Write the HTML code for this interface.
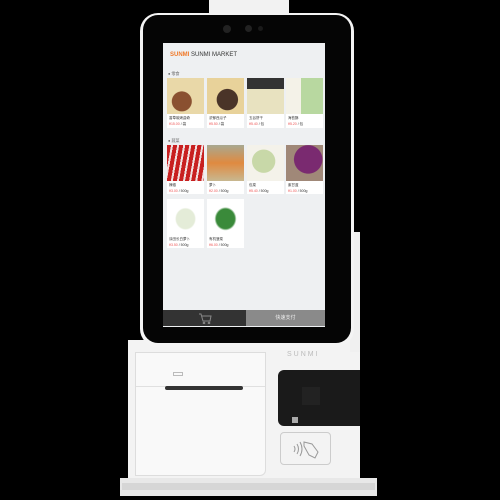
<!DOCTYPE html><html><head><meta charset="utf-8"><style>
*{margin:0;padding:0;box-sizing:border-box}
body{width:500px;height:500px;background:#000;position:relative;overflow:hidden;font-family:"Liberation Sans","Noto Sans CJK SC",sans-serif}
.a{position:absolute}
.card{position:absolute;width:37px;background:#fff}
.card .im{height:36px}
.card .t{font-size:3.5px;color:#333;padding:2px 2px 0}
.card .p{font-size:3.5px;color:#e55;padding:1px 2px}
.card .p b{color:#333;font-weight:normal}
</style></head><body>
<div class="a" style="left:209px;top:0;width:80px;height:16px;background:#f2f2f2"></div>
<div class="a" style="left:128px;top:340px;width:232px;height:142px;background:#f3f3f3"></div>
<div class="a" style="left:350px;top:232px;width:10px;height:120px;background:#f0f0f0"></div>
<div class="a" style="left:120px;top:478px;width:257px;height:18px;background:#e8e8e8"></div>
<div class="a" style="left:122px;top:483px;width:253px;height:7px;background:#d6d6d6"></div>
<!-- printer -->
<div class="a" style="left:135px;top:352px;width:131px;height:124px;background:#f9f9f9;border:1px solid #ddd;border-radius:0 0 6px 0"></div>
<div class="a" style="left:136px;top:386px;width:129px;height:1px;background:#e0e0e0"></div>
<div class="a" style="left:165px;top:386px;width:78px;height:4px;background:#333;border-radius:2px"></div>
<div class="a" style="left:173px;top:372px;width:10px;height:4px;border:1px solid #bbb"></div>
<div class="a" style="left:287px;top:351px;font-size:7px;color:#bbb;letter-spacing:2px">SUNMI</div>
<!-- card reader -->
<div class="a" style="left:278px;top:370px;width:82px;height:56px;background:#1a1a1a;border-radius:6px 0 0 6px"></div>
<div class="a" style="left:302px;top:387px;width:18px;height:18px;background:#222"></div>
<div class="a" style="left:292px;top:417px;width:6px;height:6px;background:#aaa"></div>
<div class="a" style="left:280px;top:432px;width:51px;height:33px;border:1px solid #ccc;border-radius:4px"></div>
<svg class="a" style="left:288px;top:438px" width="36" height="22" viewBox="0 0 36 22" fill="none" stroke="#999" stroke-width="1"><path d="M6 8q2 3 0 6M9 6q3 5 0 10M12 4q4 7 0 14"/><path d="M16 4l8 2 6 8-3 6-6-3-5-9z"/></svg>
<!-- tablet -->
<div class="a" style="left:140px;top:13px;width:214px;height:334px;background:#f4f4f4;border-radius:18px"></div>
<div class="a" style="left:143px;top:15px;width:208px;height:328px;background:#050505;border-radius:15px"></div>
<div class="a" style="left:223px;top:25px;width:8px;height:8px;background:#222;border-radius:50%"></div>
<div class="a" style="left:245px;top:25px;width:7px;height:7px;background:#222;border-radius:50%"></div>
<div class="a" style="left:258px;top:26px;width:5px;height:5px;background:#1a1a1a;border-radius:50%"></div>
<div class="a" style="left:163px;top:43px;width:162px;height:284px;background:#eef0f2"></div>
<div class="a" style="left:170px;top:52px;font-size:6px;font-weight:bold;color:#f07a2a">SUNMI <span style="color:#333;font-weight:normal">SUNMI MARKET</span></div>
<div class="a" style="left:168px;top:71px;font-size:4px;color:#666">● 零食</div>
<div class="a" style="left:168px;top:138px;font-size:4px;color:#666">● 蔬菜</div>
<div class="a" style="left:163px;top:310px;width:83px;height:16px;background:#333"></div>
<svg class="a" style="left:198px;top:312px" width="14" height="12" viewBox="0 0 14 12" fill="none" stroke="#888" stroke-width="1"><path d="M1 2h2l2 7h7l1-5H4"/><circle cx="6" cy="11" r="0.8"/><circle cx="11" cy="11" r="0.8"/></svg>
<div class="a" style="left:246px;top:310px;width:79px;height:16px;background:#8a8a8a;color:#eee;font-size:5px;text-align:center;line-height:16px">快速支付</div>
<div class="card" style="left:167px;top:78px"><div class="im" style="background:radial-gradient(circle at 40% 65%,#8a5030 30%,#e9d8a8 32%)"></div><div class="t">香草碳烤曲奇</div><div class="p">¥15.00 <b>/ 袋</b></div></div>
<div class="card" style="left:207px;top:78px"><div class="im" style="background:radial-gradient(circle at 55% 60%,#4a3428 35%,#e8d29a 37%)"></div><div class="t">浓郁西瓜子</div><div class="p">¥5.50 <b>/ 袋</b></div></div>
<div class="card" style="left:247px;top:78px"><div class="im" style="background:linear-gradient(#333 0 30%,#e8e2c0 30%)"></div><div class="t">五谷饼干</div><div class="p">¥5.40 <b>/ 包</b></div></div>
<div class="card" style="left:286px;top:78px"><div class="im" style="background:linear-gradient(90deg,#f4f2e8 40%,#b8d8a0 40%)"></div><div class="t">海苔酥</div><div class="p">¥5.20 <b>/ 包</b></div></div>
<div class="card" style="left:167px;top:145px"><div class="im" style="background:repeating-linear-gradient(100deg,#c82020 0 4px,#f0e0e0 4px 6px)"></div><div class="t">辣椒</div><div class="p">¥3.00 <b>/ 500g</b></div></div>
<div class="card" style="left:207px;top:145px"><div class="im" style="background:linear-gradient(#a8a890,#e08a40 50%,#c8b890)"></div><div class="t">萝卜</div><div class="p">¥2.00 <b>/ 500g</b></div></div>
<div class="card" style="left:247px;top:145px"><div class="im" style="background:radial-gradient(circle at 45% 45%,#c8d8a8 40%,#f4f2ea 42%)"></div><div class="t">包菜</div><div class="p">¥5.40 <b>/ 500g</b></div></div>
<div class="card" style="left:286px;top:145px"><div class="im" style="background:radial-gradient(circle at 60% 40%,#7a2a70 45%,#a08878 47%)"></div><div class="t">紫甘蓝</div><div class="p">¥1.00 <b>/ 500g</b></div></div>
<div class="card" style="left:167px;top:199px"><div class="im" style="background:radial-gradient(ellipse at 50% 55%,#e4ecd8 35%,#fff 40%)"></div><div class="t">涂田长白萝卜</div><div class="p">¥3.50 <b>/ 500g</b></div></div>
<div class="card" style="left:207px;top:199px"><div class="im" style="background:radial-gradient(ellipse at 50% 55%,#3a8a3a 35%,#fff 42%)"></div><div class="t">有机菠菜</div><div class="p">¥6.00 <b>/ 500g</b></div></div>
</body></html>
